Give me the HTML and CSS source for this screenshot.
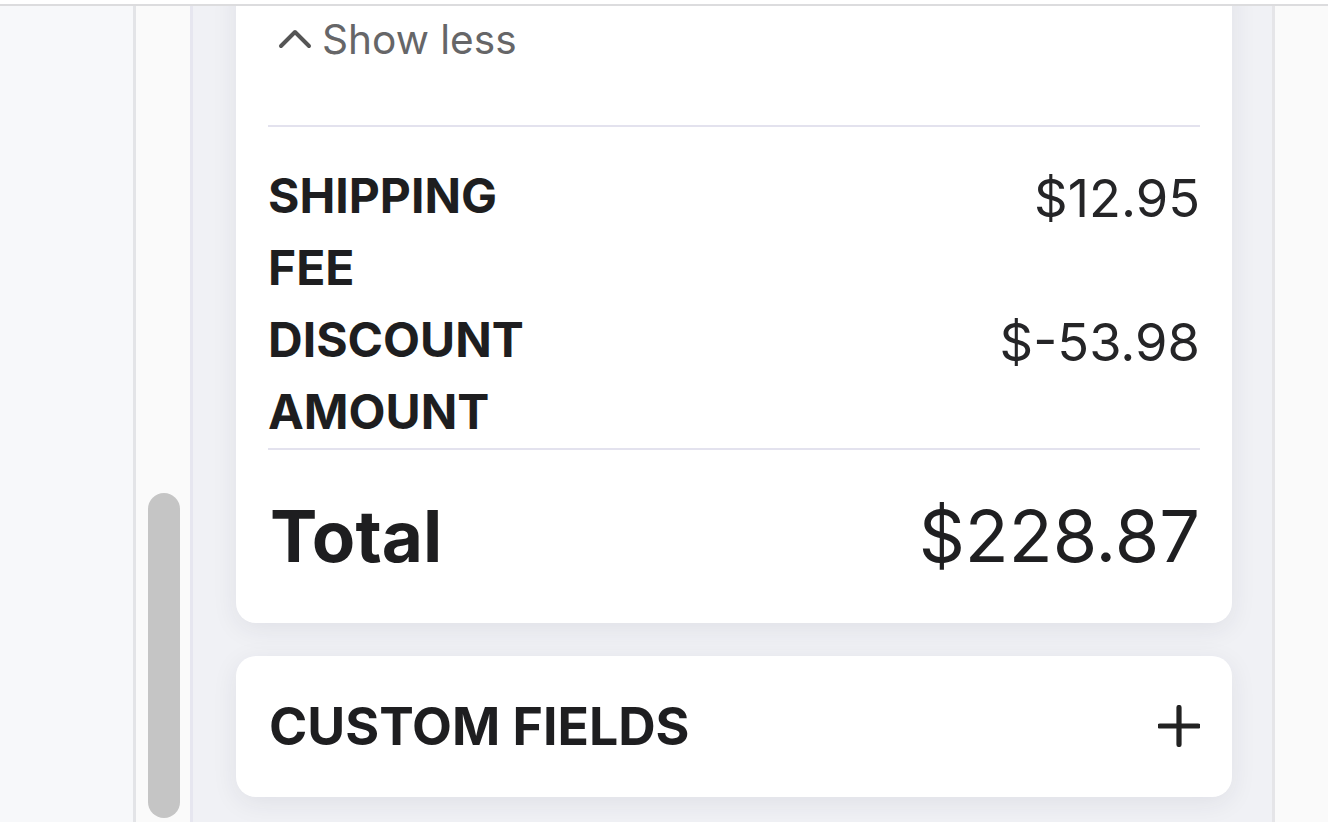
FILE: index.html
```html
<!DOCTYPE html>
<html lang="en">
<head>
<meta charset="utf-8">
<title>Order summary</title>
<link rel="stylesheet" href="styles.css">
</head>
<body>
<div class="frame">
  <div class="left-pane"></div>
  <div class="track"><div class="thumb"></div></div>
  <main class="main">
    <section class="card summary">
      <button class="toggle" type="button">
        <svg class="chev" width="34" height="20" viewBox="0 0 34 20" aria-hidden="true">
          <polyline points="3,17 17,3 31,17" fill="none" stroke="#555" stroke-width="4" stroke-linecap="round" stroke-linejoin="round"/>
        </svg>
        <span>Show less</span>
      </button>
      <div class="rows">
        <div class="row">
          <div class="label">SHIPPING FEE</div>
          <div class="value">$12.95</div>
        </div>
        <div class="row">
          <div class="label">DISCOUNT AMOUNT</div>
          <div class="value">$-53.98</div>
        </div>
      </div>
      <div class="total">
        <div class="total-label">Total</div>
        <div class="total-value">$228.87</div>
      </div>
    </section>
    <section class="card custom">
      <div class="custom-title">CUSTOM FIELDS</div>
      <svg class="plus" width="42" height="42" viewBox="0 0 42 42" aria-hidden="true">
        <path d="M21 2.5 V39.5 M2 21 H40" fill="none" stroke="#222" stroke-width="5.2" stroke-linecap="round"/>
      </svg>
    </section>
  </main>
  <div class="right-pane"></div>
</div>
</body>
</html>
```
FILE: styles.css
```css
html, body {
  margin: 0;
  padding: 0;
  background: #ffffff;
  font-family: Inter, "Noto Sans", "Liberation Sans", sans-serif;
  color: #1e1e20;
}
body {
  padding-top: 4px;
  height: 822px;
  box-sizing: border-box;
  overflow: hidden;
}
.frame {
  display: flex;
  border-top: 2px solid #dcdcde;
  height: 816px;
  overflow: hidden;
}
.left-pane {
  width: 133px;
  flex: none;
  background: #f7f8fa;
  border-right: 3px solid #e3e4e7;
}
.track {
  width: 57px;
  flex: none;
  background: #fafafa;
  border-right: 3px solid #e6e6ef;
  display: flex;
  flex-direction: column;
  justify-content: flex-end;
  padding: 0 10px 4px 12px;
  box-sizing: border-box;
}
.thumb {
  height: 325px;
  background: #c5c5c5;
  border-radius: 16px;
}
.main {
  flex: 1;
  background: #f0f1f5;
  padding: 0 40px 0 43px;
  border-right: 3px solid #e5e5e8;
  display: flex;
  flex-direction: column;
  gap: 33px;
}
.right-pane {
  width: 53px;
  flex: none;
  background: #fafafa;
}
.card {
  background: #ffffff;
  border-radius: 20px;
  box-shadow: 0 6px 26px rgba(40, 40, 70, 0.08);
  padding: 0 32px;
}
.summary {
  margin-top: -36px;
  padding-top: 40px;
}
.toggle {
  display: flex;
  align-items: center;
  gap: 10px;
  border: 0;
  background: none;
  padding: 0 0 0 10px;
  font: inherit;
  font-size: 40.6px;
  line-height: 60px;
  color: #666668;
  height: 60px;
}
.chev {
  display: block;
  margin-top: -2px;
}
.rows {
  border-top: 2px solid #e3e2ee;
  border-bottom: 2px solid #e3e2ee;
  margin-top: 55px;
  padding-top: 33px;
}
.row {
  display: flex;
  justify-content: space-between;
  align-items: flex-start;
}
.label {
  width: 280px;
  font-weight: 700;
  font-size: 48px;
  line-height: 72px;
  color: #1e1e20;
}
.value {
  font-size: 52.4px;
  line-height: 72px;
  padding-top: 2px;
  color: #252527;
}
.total {
  display: flex;
  justify-content: space-between;
  align-items: center;
  padding: 32px 0 33px;
  font-size: 72px;
  line-height: 108px;
}
.total-label {
  font-weight: 700;
  padding-left: 2px;
  font-size: 71px;
}
.total-value {
  color: #1f1f21;
}
.custom {
  display: flex;
  justify-content: space-between;
  align-items: center;
  padding-top: 34px;
  padding-bottom: 35px;
}
.custom-title {
  font-weight: 700;
  font-size: 51.8px;
  line-height: 72px;
  padding-left: 1px;
}
.plus {
  display: block;
}
```
